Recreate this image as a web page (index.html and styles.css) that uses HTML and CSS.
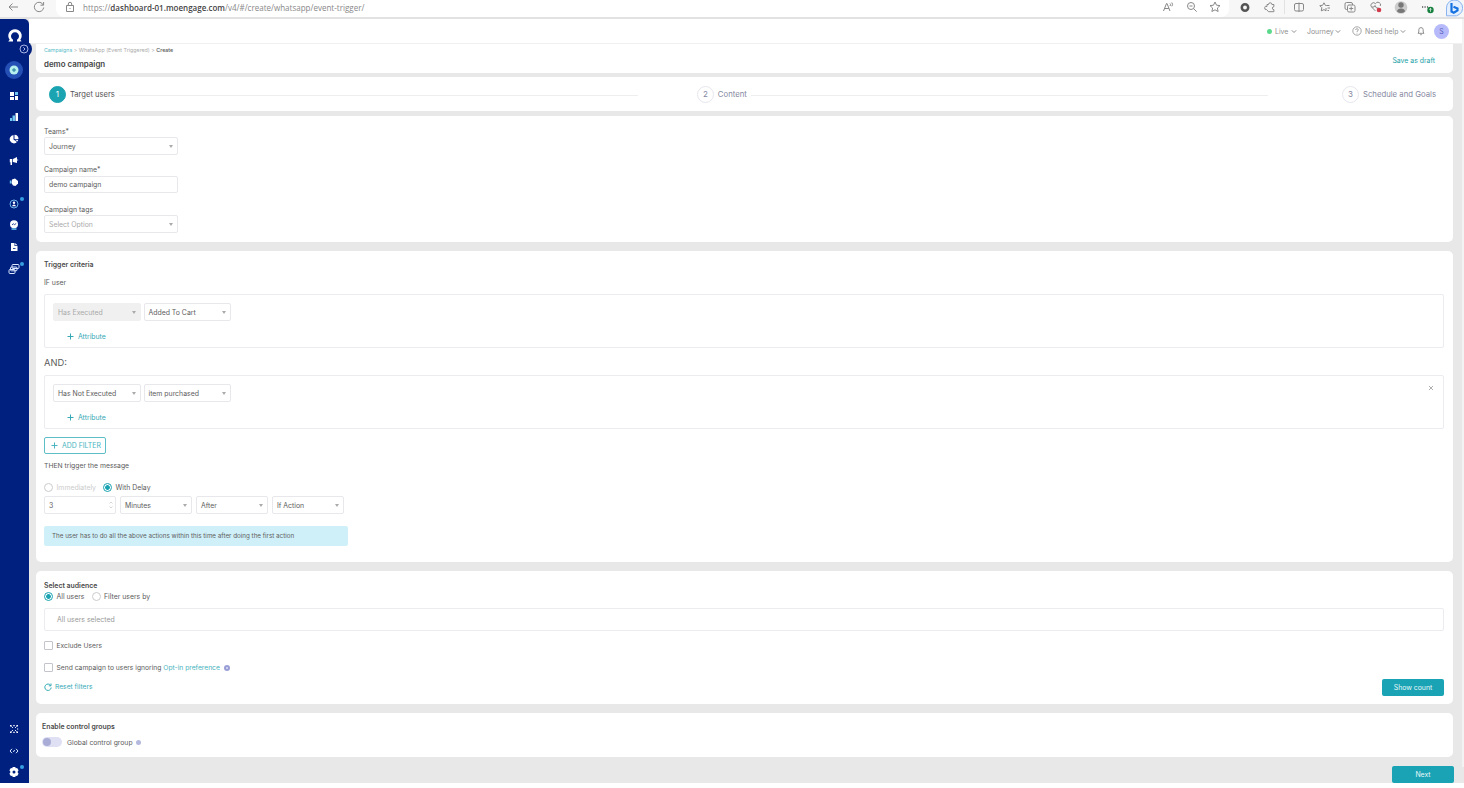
FILE: index.html
```html
<!DOCTYPE html>
<html lang="en">
<head>
  <meta charset="utf-8">
  <title>Create campaign</title>
  <link rel="stylesheet" href="styles.css">
</head>
<body>
  <div class="browser-bar">
    <div class="nav-buttons">
      <svg width="12" height="12" viewBox="0 0 12 12"><path d="M11 6H2M5.500 2.500L2 6l3.500 3.500"/></svg>
      <svg width="12" height="12" viewBox="0 0 12 12"><path d="M10.300 4A4.700 4.700 0 1 0 10.700 6.500M10.600 1v3.200H7.500"/></svg>
    </div>
    <div class="address">
      <svg class="lock" width="10" height="12" viewBox="0 0 10 12"><path d="M1.500 4.500h7v6h-7zM3.300 4.500V3a1.700 1.700 0 0 1 3.400 0v1.500M5 7v1"/></svg>
      <span class="url">https://<b>dashboard-01.moengage.com</b>/v4/#/create/whatsapp/event-trigger/</span>
      <div class="page-actions">
        <svg width="14" height="14" viewBox="0 0 14 14"><path d="M2.500 11l3-7.500h.500l3 7.500M3.600 8.500h4.300M9 3.500q1.200 1 0 2.500M10.800 2.500q1.500 2 0 3.800"/></svg>
        <svg width="14" height="14" viewBox="0 0 14 14"><circle cx="6" cy="6" r="3.500"/><path d="M8.700 8.700l3 3M4.500 6h3"/></svg>
        <svg width="14" height="14" viewBox="0 0 14 14"><path d="M7 2l1.500 3.200 3.500.4-2.600 2.400.7 3.500L7 9.800l-3.100 1.700.7-3.500L2 5.600l3.500-.4z"/></svg>
      </div>
    </div>
    <div class="extensions">
      <svg class="ext-dark" width="14" height="14" viewBox="0 0 14 14"><circle cx="7" cy="7.500" r="3.200"/></svg>
      <svg width="14" height="14" viewBox="0 0 14 14"><path d="M4 4.500h1.500a1.700 1.700 0 0 1 3.400 0h2v2.200a1.500 1.500 0 0 0 0 3v2H5.500L3.500 9.500a1.600 1.600 0 1 1 .5-3z"/></svg>
    </div>
    <div class="toolbar">
      <svg width="14" height="14" viewBox="0 0 14 14"><rect x="2.500" y="3.500" width="9" height="7.500" rx="1.500"/><path d="M7 2.500v9.500"/></svg>
      <svg width="14" height="14" viewBox="0 0 14 14"><path d="M8.800 5.500H7.500L6 2.800 4.600 5.300l-2.800.4 2 2-.5 3.200L6 9.600l2 1.300V8M9 5.500h2.500M9.500 8h2.500M9.500 10.500h1.500"/></svg>
      <svg width="14" height="14" viewBox="0 0 14 14"><rect x="2" y="2.500" width="7.500" height="7" rx="1.500"/><rect class="ext-cover" x="4.500" y="5" width="7.500" height="7" rx="1.500"/><path d="M8.200 6.500v4M6.200 8.500h4"/></svg>
      <svg width="14" height="14" viewBox="0 0 14 14"><path d="M6.500 11L2.500 7a2.500 2.500 0 0 1 4-3.300 2.500 2.500 0 0 1 4.800 2.300M3 7h2l1-1.500L7.500 8h2"/><circle class="red" cx="10" cy="10" r="2.300"/></svg>
      <svg width="14" height="14" viewBox="0 0 14 14"><circle class="profile-bg" cx="7" cy="7.500" r="6.300"/><circle class="profile" cx="7" cy="5" r="2.700"/><path class="profile" d="M3 11.500c0-4 8-4 8 0q-4 3-8 0z"/></svg>
      <svg width="14" height="14" viewBox="0 0 14 14"><path class="dots" d="M2 7h1.200M4.500 7h1.200M7 7h1"/><circle class="green" cx="10.500" cy="10" r="3.200"/><path class="up" d="M10.500 11.800V8.300M9.200 9.600l1.300-1.300 1.300 1.300"/></svg>
      <svg class="bing" width="18" height="18" viewBox="0 0 18 18"><path class="bubble" d="M9 0a8 8 0 1 1-1 15.800H1.500V8A7.800 7.800 0 0 1 9 0z"/><path class="bing-mark" d="M6.500 3v8.500l2.300 1.300 3.700-2.300V8.500L8.500 6.800"/></svg>
    </div>
  </div>

  <div class="app">
    <nav class="sidebar">
      <div class="side-top">
        <svg class="side-logo" width="16" height="16" viewBox="0 0 16 16"><path fill-rule="evenodd" d="M8 1.200a6.600 6.600 0 0 0-5.300 10.600L1.200 13.500H6v-1.700a4 4 0 1 1 4 0v1.700h4.800l-1.500-1.700A6.600 6.600 0 0 0 8 1.200z"/></svg>
        <span class="side-toggle"><svg width="10" height="10" viewBox="0 0 10 10"><circle cx="5" cy="5" r="4"/><path d="M4.300 3.300L6 5 4.300 6.700"/></svg></span>
      </div>
      <a class="side-item add"><svg width="10" height="10" viewBox="0 0 10 10"><circle class="mint" cx="5" cy="5" r="4.500"/><path class="add-plus" d="M5 3v4M3 5h4"/></svg></a>
      <a class="side-item"><svg width="10" height="10" viewBox="0 0 10 10"><path d="M1 1h4v4H1zM1 6h4v3H1zM6 5h3v4H6z"/><path class="sky" d="M6 1h3v3H6z"/></svg></a>
      <a class="side-item"><svg width="10" height="10" viewBox="0 0 10 10"><path d="M6.500 1H9v8H6.500z"/><path class="sky" d="M3.500 3.500H6V9H3.500zM1 6h2v3H1z"/></svg></a>
      <a class="side-item"><svg width="10" height="10" viewBox="0 0 10 10"><path d="M4.500 1v4.500L8 8A4.200 4.200 0 1 1 4.500 1zM5.500.7A4.300 4.300 0 0 1 9.500 5h-4zM6 5.800h3.300L8.500 7.500z"/></svg></a>
      <a class="side-item"><svg width="10" height="10" viewBox="0 0 10 10"><path d="M4 3l4-2v6L4 6zM8.400 3l1 1-1 1zM.800 3H3.300v3.300H3V9H1.500V6.300H.800z"/></svg></a>
      <a class="side-item"><svg width="10" height="10" viewBox="0 0 10 10"><path d="M3 2.500L4.500 2 6 1.500 9 4v2.500L6.500 9 4 8.500 2.500 6z"/><path class="sky" d="M.8 3.500h1.500v3H.8z"/></svg></a>
      <a class="side-item has-dot"><svg width="10" height="10" viewBox="0 0 10 10"><circle class="ring" cx="5" cy="5" r="4"/><circle cx="5" cy="3.800" r="1.200"/><path d="M2.800 7.200Q5 4 7.200 7.200z"/></svg></a>
      <a class="side-item"><svg width="10" height="10" viewBox="0 0 10 10"><circle cx="5" cy="4.300" r="4"/><path class="navy" d="M3 4.800l1.500-1 1 .8L7.200 3.500"/><path class="sky" d="M2.500 8.300h5v1.500h-5z"/></svg></a>
      <a class="side-item"><svg width="10" height="10" viewBox="0 0 10 10"><path d="M2 1h3.500v3H8.500v5H2z"/><path d="M6.200 1L8.500 3.300H6.200z"/><path class="navy" d="M4 6.500h2.500"/></svg></a>
      <a class="side-item has-dot"><svg width="12" height="12" viewBox="0 0 12 12"><rect class="line" x="4" y="1.500" width="7" height="4" rx="1"/><rect class="line" x="2.500" y="4" width="6.500" height="3.800" rx="1"/><rect class="line" x="1" y="6.500" width="6" height="4" rx="1"/></svg></a>
      <div class="side-bottom">
        <a class="side-item"><svg width="10" height="10" viewBox="0 0 10 10"><path class="line" d="M2.500 2.500L4 4M7.500 2.500L6 4M2.500 7.500L4 6M7.500 7.500L6 6"/><path d="M1 1h1.600v1.600H1zM7.400 1H9v1.600H7.400zM1 7.400h1.600V9H1zM7.400 7.400H9V9H7.400zM4.300 1h1.400v1.200H4.300zM4.300 7.800h1.400V9H4.300zM8 4.400h1.200v1.200H8z"/></svg></a>
        <a class="side-item"><svg width="10" height="10" viewBox="0 0 10 10"><path class="line" d="M3 2.800L1 5l2 2.200M7 2.800L9 5 7 7.200M4.400 6l1.200-2"/></svg></a>
        <a class="side-item has-dot"><svg width="12" height="12" viewBox="0 0 12 12"><path fill-rule="evenodd" d="M4.700 1h2.600l.4 1.300 1.400-.3 1.500 2.200-.9 1.200v1.200l.9 1.200-1.500 2.200-1.400-.3-.4 1.300H4.700l-.4-1.300-1.400.3-1.500-2.200.9-1.200V5.400l-.9-1.200L2.900 2l1.400.3zM6 4.500a1.500 1.500 0 1 0 0 3 1.500 1.500 0 0 0 0-3z"/></svg></a>
      </div>
    </nav>

    <div class="main">
      <header class="topbar">
        <span class="live-dot"></span>
        <span class="top-link live">Live</span><svg class="chevron" width="6" height="5" viewBox="0 0 6 5"><path d="M.8 1.300L3 3.500l2.200-2.200"/></svg>
        <span class="top-link journey">Journey</span><svg class="chevron" width="6" height="5" viewBox="0 0 6 5"><path d="M.8 1.300L3 3.500l2.200-2.200"/></svg>
        <svg class="help-icon" width="10" height="10" viewBox="0 0 10 10"><circle cx="5" cy="5" r="4.200"/><path d="M3.600 4Q3.800 2.700 5 2.700T6.400 4Q6.400 4.700 5 5.300V6M5 6.800v.7"/></svg>
        <span class="top-link help">Need help</span><svg class="chevron" width="6" height="5" viewBox="0 0 6 5"><path d="M.8 1.300L3 3.500l2.200-2.200"/></svg>
        <svg class="bell" width="8" height="10" viewBox="0 0 8 10"><path d="M1 7.300h6L6.200 6V3.800a2.200 2.200 0 0 0-4.400 0V6zM3.200 8.700h1.600"/></svg>
        <span class="avatar">S</span>
      </header>

      <div class="content">
        <section class="card title-card">
          <div>
            <div class="breadcrumb"><a>Campaigns</a> &gt; WhatsApp (Event Triggered) &gt; <b>Create</b></div>
            <h1>demo campaign</h1>
          </div>
          <a class="save-draft">Save as draft</a>
        </section>

        <section class="card stepper">
          <div class="step active"><span class="num">1</span><span class="step-name">Target users</span></div>
          <div class="step-line first"></div>
          <div class="step second"><span class="num">2</span><span class="step-name">Content</span></div>
          <div class="step-line last"></div>
          <div class="step"><span class="num">3</span><span class="step-name">Schedule and Goals</span></div>
        </section>

        <section class="card details">
          <label>Teams*</label>
          <div class="select">Journey</div>
          <label>Campaign name*</label>
          <div class="input">demo campaign</div>
          <label>Campaign tags</label>
          <div class="select placeholder">Select Option</div>
        </section>

        <section class="card trigger">
          <h2>Trigger criteria</h2>
          <p class="if-user">IF user</p>
          <div class="filter-box">
            <div class="row">
              <div class="select disabled">Has Executed</div>
              <div class="select">Added To Cart</div>
            </div>
            <a class="attribute"><svg width="7" height="7" viewBox="0 0 7 7"><path d="M3.500.5v6M.5 3.500h6"/></svg>Attribute</a>
          </div>
          <p class="and">AND:</p>
          <div class="filter-box">
            <div class="row">
              <div class="select">Has Not Executed</div>
              <div class="select">item purchased</div>
              <svg class="remove" width="6" height="6" viewBox="0 0 6 6"><path d="M1 1l4 4M5 1L1 5"/></svg>
            </div>
            <a class="attribute"><svg width="7" height="7" viewBox="0 0 7 7"><path d="M3.500.5v6M.5 3.500h6"/></svg>Attribute</a>
          </div>
          <div class="add-filter"><svg width="7" height="7" viewBox="0 0 7 7"><path d="M3.500.5v6M.5 3.500h6"/></svg>ADD FILTER</div>
          <p class="then">THEN trigger the message</p>
          <div class="radios delay">
            <span class="radio"></span><span class="radio-text muted">Immediately</span>
            <span class="radio checked"></span><span class="radio-text">With Delay</span>
          </div>
          <div class="row delay-row">
            <div class="input number">3<svg width="6" height="10" viewBox="0 0 6 10"><path d="M1.500 3.500L3 2l1.500 1.500M1.500 6.500L3 8l1.500-1.500"/></svg></div>
            <div class="select">Minutes</div>
            <div class="select">After</div>
            <div class="select">If Action</div>
          </div>
          <div class="info">The user has to do all the above actions within this time after doing the first action</div>
        </section>

        <section class="card audience">
          <h2>Select audience</h2>
          <div class="radios">
            <span class="radio checked"></span><span class="radio-text">All users</span>
            <span class="radio"></span><span class="radio-text">Filter users by</span>
          </div>
          <div class="selected-box">All users selected</div>
          <div class="check-row"><span class="checkbox"></span>Exclude Users</div>
          <div class="check-row optin"><span class="checkbox"></span>Send campaign to users ignoring&nbsp;<a>Opt-in preference</a><span class="info-dot"></span></div>
          <div class="audience-footer">
            <a class="reset"><svg width="8" height="8" viewBox="0 0 8 8"><path d="M6.700 2.500A3.200 3.200 0 1 0 7.200 4.500M7 .5v2.300H4.800"/></svg>Reset filters</a>
            <button class="btn">Show count</button>
          </div>
        </section>

        <section class="card control">
          <h2>Enable control groups</h2>
          <div class="toggle-row"><span class="toggle"></span>Global control group<span class="info-dot small"></span></div>
        </section>

        <div class="page-footer"><button class="btn">Next</button></div>
      </div>
    </div>
    <div class="scrollbar"></div>
  </div>
</body>
</html>
```
FILE: styles.css
```css
* {
  box-sizing: border-box;
}

body {
  margin: 0;
  height: 788px;
  overflow: hidden;
  background: #fff;
  font-family: Inter, "Liberation Sans", sans-serif;
  font-size: 6.900px;
  line-height: 11px;
  color: #5c5c5c;
}

h1, h2, p {
  margin: 0;
}

svg {
  flex: none;
  fill: none;
  stroke: currentColor;
}

/* browser bar */
.browser-bar {
  display: flex;
  height: 19px;
  background: #f7f7f7;
  border-bottom: 2px solid #e2e2e2;
  color: #888;
}

.nav-buttons {
  display: flex;
  width: 56px;
  padding: 1px 0 0 7px;
  gap: 14px;
}

.address {
  display: flex;
  width: 1173px;
  height: 17px;
  padding-left: 9px;
  background: #fff;
  border-radius: 0 0 8px 8px;
}

.lock {
  margin-top: 1px;
}

.url {
  flex: 1;
  margin-left: 8px;
  font-family: "Open Sans", sans-serif;
  font-size: 8.030px;
  line-height: 15px;
  color: #888;
}

.url b {
  font-weight: 600;
  color: #444;
}

.page-actions {
  display: flex;
  gap: 9.500px;
  padding-right: 7px;
}

.extensions {
  display: flex;
  gap: 11px;
  width: 56px;
  height: 14px;
  padding-left: 9px;
  border-right: 1px solid #e2e2e2;
}

.ext-dark {
  stroke: #555;
  stroke-width: 2.500;
}

.toolbar {
  display: flex;
  gap: 11.500px;
  padding-left: 7px;
}

.ext-cover {
  fill: #f7f7f7;
}

.red {
  fill: #d13a4a;
  stroke: none;
}

.profile-bg {
  fill: #ccc;
  stroke: none;
}

.profile {
  fill: #777;
  stroke: none;
}

.green {
  fill: #157f3d;
  stroke: none;
}

.up {
  stroke: #fff;
  stroke-width: .7;
}

.dots {
  stroke: #555;
  stroke-width: 1.300;
}

.bubble {
  fill: #e4efff;
  stroke: #8ab3f0;
}

.bing-mark {
  stroke: #1672e0;
  stroke-width: 2.200;
}

/* shell */
.app {
  display: flex;
  height: 764px;
  background: #e8e8e8;
}

.sidebar {
  display: flex;
  flex-direction: column;
  width: 29px;
  background: #002080;
  border-radius: 0 5px 0 0;
  color: #fff;
}

.side-top {
  position: relative;
  height: 40px;
  padding: 9px 0 0 6.500px;
}

.side-logo {
  fill: #fff;
  stroke: none;
}

.side-toggle {
  position: absolute;
  top: 22px;
  left: 16px;
  width: 16px;
  height: 16px;
  padding: 3px;
  border-radius: 50%;
  background: #002080;
  color: #a9b3e6;
}

.side-toggle svg {
  display: block;
}

.side-item {
  position: relative;
  display: flex;
  align-items: center;
  justify-content: center;
  width: 27px;
  height: 21.600px;
}

.side-item svg {
  fill: #fff;
  stroke: none;
}

.side-item.add {
  width: 18px;
  height: 18px;
  margin: 2px 0 6px 5px;
  border-radius: 50%;
  background: #2450b5;
}

.side-item .mint {
  fill: #b5f0ee;
}

.side-item .add-plus {
  stroke: #247a9c;
}

.side-item .sky {
  fill: #6fc6f0;
}

.side-item .ring {
  fill: none;
  stroke: #6fb4e8;
}

.side-item .navy {
  fill: none;
  stroke: #002080;
  stroke-width: .8;
}

.side-item .line {
  fill: none;
  stroke: #dbe8ff;
}

.has-dot::after {
  content: "";
  position: absolute;
  top: 4px;
  left: 20px;
  width: 4px;
  height: 4px;
  border-radius: 50%;
  background: #379fe0;
}

.side-bottom {
  margin-top: auto;
}

.main {
  flex: 1;
}

.scrollbar {
  width: 2px;
  height: 748px;
  background: #f3f3f3;
}

/* header */
.topbar {
  display: flex;
  align-items: center;
  justify-content: flex-end;
  height: 25px;
  padding-right: 13px;
  background: #fff;
  border-bottom: 1px solid #f0f0f0;
  color: #909090;
}

.live-dot {
  width: 5px;
  height: 5px;
  margin-right: 3px;
  border-radius: 50%;
  background: #5ad98a;
}

.top-link.live {
  width: 16px;
}

.top-link.journey {
  width: 28px;
  margin-left: 10px;
}

.help-icon {
  margin: 0 3px 0 11px;
  stroke-width: .8;
}

.top-link.help {
  width: 35px;
}

.bell {
  margin: 0 9px 0 11px;
}

.avatar {
  width: 15px;
  height: 15px;
  border-radius: 50%;
  background: #b6bafa;
  color: #5a5fc0;
  line-height: 15px;
  text-align: center;
}

/* cards */
.content {
  padding: 0 9px 0 7px;
}

.card {
  padding: 0 9px 0 8px;
  background: #fff;
  border-radius: 5px;
}

.card h2 {
  font-size: 6.900px;
  font-weight: 600;
  line-height: 11px;
  color: #4a4a4a;
}

.title-card {
  display: flex;
  justify-content: space-between;
  height: 29px;
  margin-bottom: 4px;
  border-radius: 0 0 5px 5px;
}

.breadcrumb {
  padding-top: 2px;
  font-size: 5.300px;
  line-height: 9px;
  color: #aaa;
}

.breadcrumb a {
  color: #57bcc8;
}

.breadcrumb b {
  font-weight: 500;
  color: #555;
}

.title-card h1 {
  margin-top: 3px;
  font-size: 7.900px;
  font-weight: 600;
  line-height: 12px;
  color: #444;
}

.save-draft {
  margin: 11px 9px 0 0;
  color: #219fa8;
}

.stepper {
  display: flex;
  align-items: center;
  height: 34px;
  margin-bottom: 5px;
  padding: 0 17px 0 13px;
}

.step {
  display: flex;
  align-items: center;
  gap: 4px;
  color: #8587a0;
}

.num {
  width: 17px;
  height: 17px;
  border: 1px solid #e6e6ee;
  border-radius: 50%;
  font-size: 8px;
  line-height: 15px;
  text-align: center;
}

.step-name {
  font-size: 7.750px;
}

.step.active {
  color: #555;
}

.step.active .num {
  border-color: #1aa3b0;
  background: #1aa3b0;
  color: #fff;
}

.step.active .step-name {
  font-size: 7.600px;
}

.step-line {
  height: 1px;
  background: #eee;
}

.step-line.first {
  width: 519px;
  margin: 2px 59px 0 4px;
}

.step-line.last {
  flex: 1;
  margin: 2px 74px 0 4px;
}

/* form parts */
label {
  display: block;
  height: 11px;
}

.select,
.input {
  display: flex;
  align-items: center;
  justify-content: space-between;
  width: 134px;
  height: 18px;
  padding: 0 4px;
  border: 1px solid #e8e8ec;
  border-radius: 2px;
  background: #fff;
  color: #5c5c5c;
  white-space: nowrap;
}

.select::after {
  content: "";
  border: 2.500px solid transparent;
  border-top: 3px solid #aaa;
  border-bottom: 0;
}

.select.placeholder {
  color: #aaa;
}

.select.disabled {
  border-color: #f0f0f0;
  background: #f0f0f0;
  color: #aaa;
}

.row {
  display: flex;
  gap: 3px;
}

.details {
  height: 126px;
  margin-bottom: 9px;
  padding-top: 10px;
}

.details .select,
.details .input {
  margin-bottom: 9px;
}

.details .input {
  height: 17px;
  margin: 1px 0 11px;
}

.trigger {
  height: 311px;
  margin-bottom: 9px;
  padding-top: 8px;
}

.if-user {
  margin: 7px 0 6px;
}

.filter-box {
  height: 54px;
  padding: 8px 9px 0 8px;
  border: 1px solid #ececf0;
  border-radius: 2px;
}

.filter-box .select {
  width: 87.500px;
}

.attribute {
  display: flex;
  align-items: center;
  gap: 4px;
  margin: 10px 0 0 14px;
  color: #36a9b5;
}

.and {
  margin: 9px 0 6px;
  font-size: 9.300px;
  line-height: 12px;
}

.remove {
  margin: 1px 0 0 auto;
  color: #999;
  stroke-width: .8;
}

.and + .filter-box {
  padding-top: 8px;
}

.add-filter {
  display: flex;
  align-items: center;
  gap: 4px;
  width: 62px;
  height: 17px;
  margin-top: 8px;
  padding-left: 6px;
  border: 1px solid #5dbec8;
  border-radius: 2px;
  color: #4ab5c0;
}

.then {
  margin: 6px 0 11px;
  font-size: 6.800px;
}

.radios {
  display: flex;
  align-items: center;
  height: 10px;
}

.radio {
  width: 9px;
  height: 9px;
  margin-right: 3.500px;
  border: 1px solid #ccc;
  border-radius: 50%;
}

.radio.checked {
  border-color: #1aa3b0;
  background: radial-gradient(circle, #1aa3b0 2px, #fff 2.700px);
}

.radio-text {
  margin-right: 7px;
}

.radio-text.muted {
  color: #ccc;
}

.delay-row {
  gap: 3.700px;
  margin-top: 4px;
}

.delay-row .select,
.delay-row .input {
  width: 72.300px;
}

.delay-row .number {
  padding-right: 1px;
}

.number svg {
  color: #bbb;
  stroke-width: .6;
}

.info {
  width: 304px;
  height: 20px;
  margin-top: 12px;
  padding-left: 8px;
  border-radius: 2px;
  background: #d0f0f9;
  font-size: 6.280px;
  line-height: 21px;
}

.audience {
  height: 133px;
  margin-bottom: 9px;
  padding-top: 9px;
}

.selected-box {
  height: 23px;
  margin: 7px 0 9px;
  padding-left: 12px;
  border: 1px solid #ececf0;
  border-radius: 2px;
  line-height: 22px;
  color: #999;
}

.check-row {
  display: flex;
  align-items: center;
  height: 10px;
  font-size: 6.730px;
}

.check-row a {
  color: #44b2bd;
}

.check-row.optin {
  margin-top: 12.500px;
}

.checkbox {
  width: 9px;
  height: 9px;
  margin-right: 3.500px;
  border: 1px solid #c4c4cc;
  border-radius: 1px;
}

.info-dot {
  width: 6px;
  height: 6px;
  margin-left: 4px;
  border-radius: 50%;
  background: radial-gradient(circle, #e0e2f7 .5px, #9a9ed6 1.200px);
}

.info-dot.small {
  width: 5px;
  height: 5px;
  margin-left: 3px;
  background: #b4b9de;
}

.audience-footer {
  display: flex;
  align-items: center;
  justify-content: space-between;
  margin-top: 6px;
}

.reset {
  display: flex;
  align-items: center;
  gap: 3px;
  font-size: 6.700px;
  color: #36a9b5;
}

.btn {
  width: 62px;
  height: 17px;
  padding: 0;
  border: 0;
  border-radius: 2px;
  background: #1aa3b5;
  color: #e6f8fa;
  font-family: inherit;
  font-size: 6.900px;
}

.control {
  height: 44px;
  padding: 8px 0 0 6px;
}

.toggle-row {
  display: flex;
  align-items: center;
  height: 10px;
  margin-top: 5px;
  font-size: 6.800px;
}

.toggle {
  width: 20px;
  height: 10px;
  margin-right: 5px;
  padding: 1px;
  border-radius: 5px;
  background: #dfe0f3;
}

.toggle::before {
  content: "";
  display: block;
  width: 8px;
  height: 8px;
  border-radius: 50%;
  background: #a9add6;
}

.page-footer {
  display: flex;
  justify-content: flex-end;
  margin: 9px -1px 0 0;
}
```
